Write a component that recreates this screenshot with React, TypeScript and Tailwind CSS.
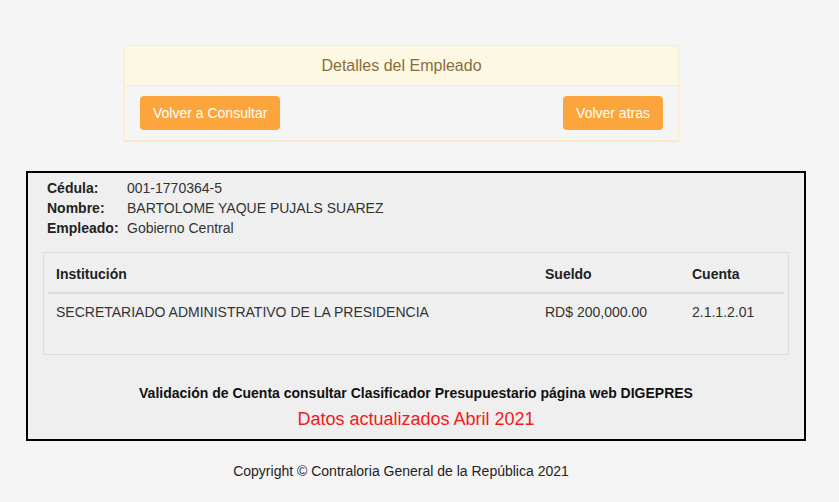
export default function App() {
  return (
    <div className="min-h-[502px] bg-[#f5f5f5] pt-[45px] text-[#333] font-['Liberation_Sans',Arial,sans-serif] text-[14px]">
      <div className="ml-[124px] w-[555px] border border-[#faebcc] bg-[#f5f5f5] shadow-[0_1px_1px_rgba(0,0,0,0.05)]">
        <div className="h-[40px] bg-[#fcf8e3] border-b border-[#faebcc] flex items-center justify-center text-[16px] text-[#8a6d3b]">
          Detalles del Empleado
        </div>
        <div className="flex justify-between items-center px-[15px] pt-[10px] pb-[10px]">
          <button className="h-[34px] px-[13px] rounded-[4px] bg-[#fca53c] text-white text-[14px]">Volver a Consultar</button>
          <button className="h-[34px] px-[13px] rounded-[4px] bg-[#fca53c] text-white text-[14px]">Volver atras</button>
        </div>
      </div>

      <div className="mt-[30px] ml-[26px] w-[780px] h-[270px] border-2 border-black bg-[#efefef] pt-[5px]">
        <div className="pl-[19px] leading-[20px]">
          <div className="flex"><span className="w-[80px] font-bold text-[#222]">Cédula:</span><span>001-1770364-5</span></div>
          <div className="flex"><span className="w-[80px] font-bold text-[#222]">Nombre:</span><span>BARTOLOME YAQUE PUJALS SUAREZ</span></div>
          <div className="flex"><span className="w-[80px] font-bold text-[#222]">Empleado:</span><span>Gobierno Central</span></div>
        </div>

        <div className="mt-[14px] ml-[15px] w-[746px] h-[103px] border border-[#dcdcdc] px-[4px] pt-[3px]">
          <div className="flex h-[38px] items-center border-b-2 border-[#dddddd] font-bold text-[#222]">
            <span className="pl-[8px] w-[497px]">Institución</span>
            <span className="w-[147px]">Sueldo</span>
            <span>Cuenta</span>
          </div>
          <div className="flex h-[37px] items-center">
            <span className="pl-[8px] w-[497px]">SECRETARIADO ADMINISTRATIVO DE LA PRESIDENCIA</span>
            <span className="w-[147px]">RD$ 200,000.00</span>
            <span>2.1.1.2.01</span>
          </div>
        </div>

        <div className="mt-[28px] text-center font-bold text-[14px] text-[#111]">
          Validación de Cuenta consultar Clasificador Presupuestario página web DIGEPRES
        </div>
        <div className="mt-[2px] text-center text-[18px] text-[#f21b1b]">Datos actualizados Abril 2021</div>
      </div>

      <div className="mt-[20px] w-[802px] text-center text-[14px] text-[#222]">
        Copyright © Contraloria General de la República 2021
      </div>
    </div>
  )
}
